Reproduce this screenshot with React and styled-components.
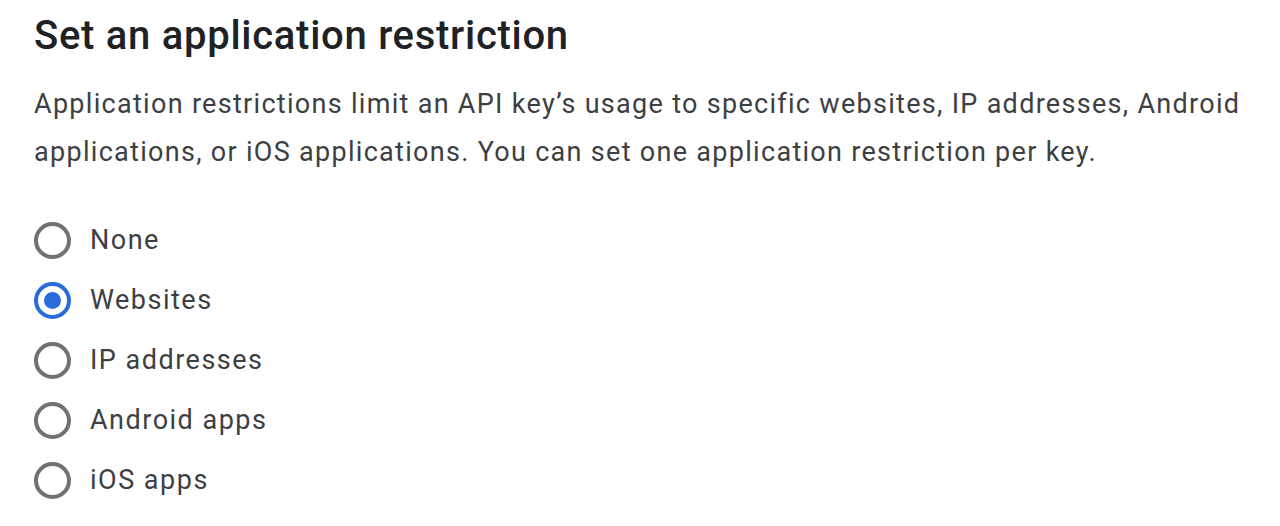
import React, { useState } from "react";
import styled, { createGlobalStyle } from "styled-components";

const GlobalStyle = createGlobalStyle`
  body {
    margin: 0;
    background: #ffffff;
    font-family: Roboto, "Liberation Sans", Arial, sans-serif;
  }
`;

const Section = styled.section`
  padding: 12px 30px 0 34px;
`;

const Title = styled.h2`
  margin: 0;
  font-size: 40px;
  font-weight: 500;
  line-height: 48px;
  letter-spacing: 0.72px;
  color: #202124;
`;

const Description = styled.p`
  margin: 20px 0 0;
  font-size: 27px;
  line-height: 48px;
  letter-spacing: 1.3px;
  color: #3c4043;
`;

const RadioGroup = styled.div`
  display: flex;
  flex-direction: column;
  margin-top: 34px;
`;

const Option = styled.label`
  display: flex;
  align-items: center;
  gap: 19px;
  height: 60px;
  font-size: 27px;
  letter-spacing: 1.5px;
  color: #3c4043;
  cursor: pointer;
`;

const HiddenInput = styled.input`
  position: absolute;
  opacity: 0;
  pointer-events: none;
`;

const Circle = styled.span`
  box-sizing: border-box;
  width: 37px;
  height: 37px;
  border-radius: 50%;
  border: 4px solid ${(p) => (p.$checked ? "#2a6bdc" : "#6f7174")};
  display: flex;
  align-items: center;
  justify-content: center;
  flex-shrink: 0;

  &::after {
    content: "";
    width: 17px;
    height: 17px;
    border-radius: 50%;
    background: #2a6bdc;
    display: ${(p) => (p.$checked ? "block" : "none")};
  }
`;

const options = ["None", "Websites", "IP addresses", "Android apps", "iOS apps"];

export default function App() {
  const [value, setValue] = useState("Websites");
  return (
    <>
      <GlobalStyle />
      <Section>
        <Title>Set an application restriction</Title>
        <Description>
          Application restrictions limit an API key’s usage to specific websites, IP addresses, Android
          applications, or iOS applications. You can set one application restriction per key.
        </Description>
        <RadioGroup role="radiogroup">
          {options.map((o) => (
            <Option key={o}>
              <HiddenInput
                type="radio"
                name="restriction"
                checked={value === o}
                onChange={() => setValue(o)}
              />
              <Circle $checked={value === o} />
              {o}
            </Option>
          ))}
        </RadioGroup>
      </Section>
    </>
  );
}
